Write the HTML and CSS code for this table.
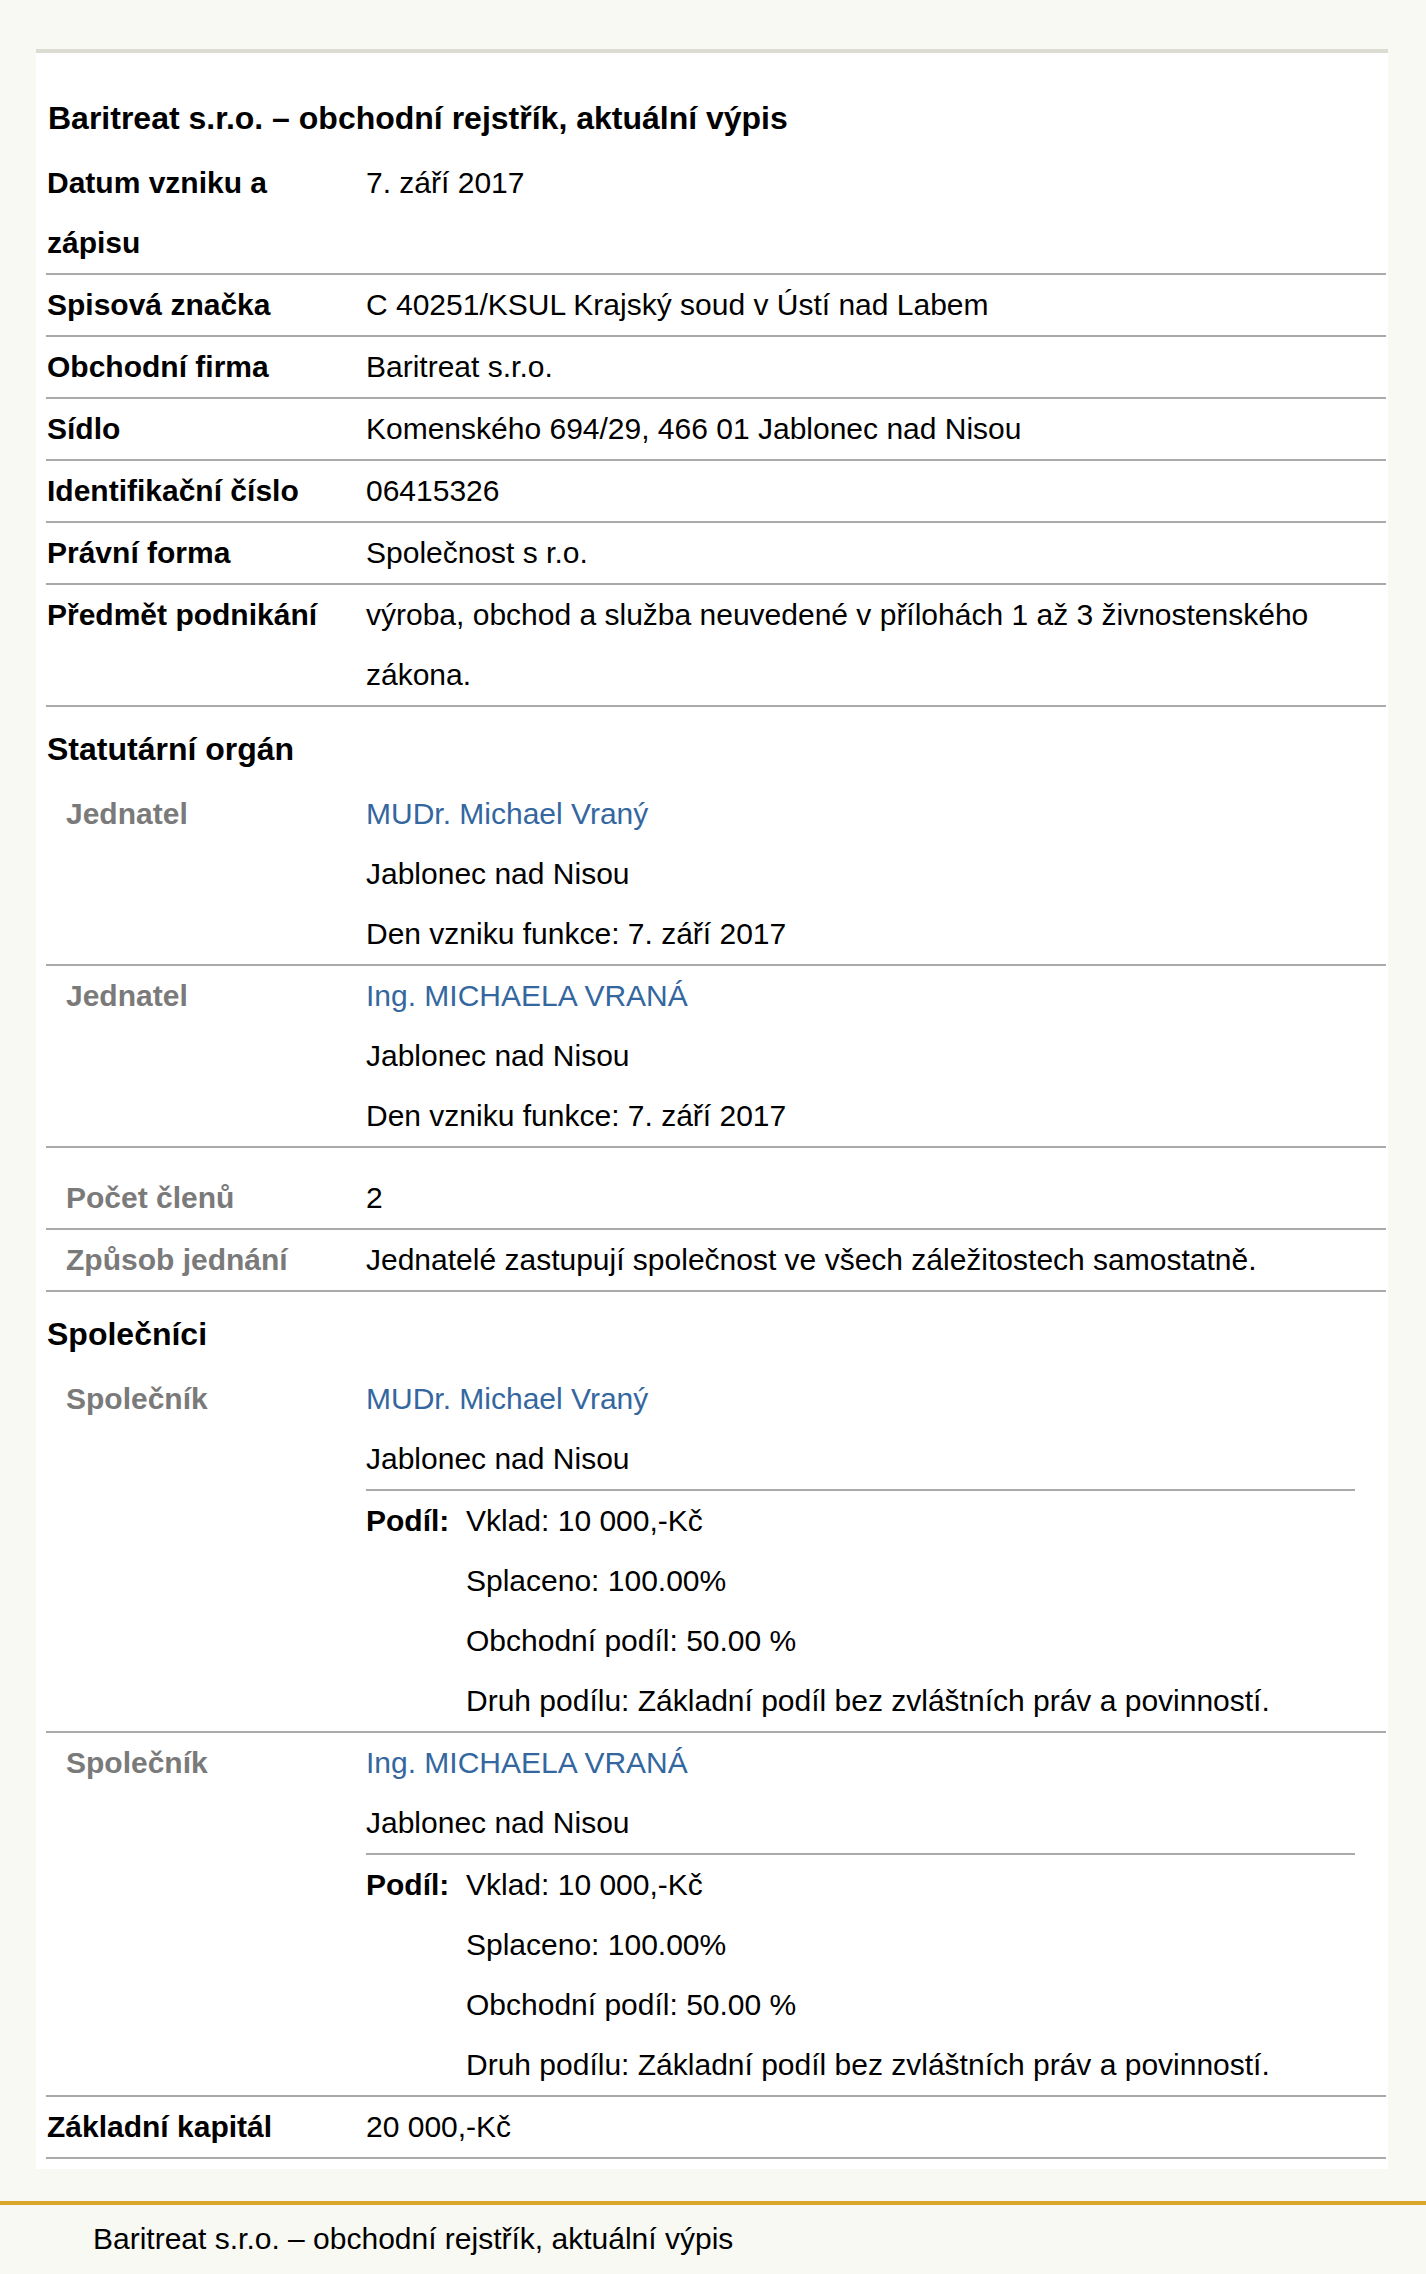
FILE: index.html
```html
<!DOCTYPE html>
<html lang="cs">
<head>
  <meta charset="UTF-8">
  <meta name="viewport" content="width=device-width, initial-scale=1.0">
  <title>Baritreat s.r.o. – obchodní rejstřík, aktuální výpis</title>
  <link rel="stylesheet" href="styles.css">
</head>
<body>
  <div class="page">
    <div class="sheet">
      <h1 class="title">Baritreat s.r.o. – obchodní rejstřík, aktuální výpis</h1>

      <div class="row">
        <div class="label">Datum vzniku a zápisu</div>
        <div class="value">7. září 2017</div>
      </div>
      <div class="row">
        <div class="label">Spisová značka</div>
        <div class="value">C 40251/KSUL Krajský soud v Ústí nad Labem</div>
      </div>
      <div class="row">
        <div class="label">Obchodní firma</div>
        <div class="value">Baritreat s.r.o.</div>
      </div>
      <div class="row">
        <div class="label">Sídlo</div>
        <div class="value">Komenského 694/29, 466 01 Jablonec nad Nisou</div>
      </div>
      <div class="row">
        <div class="label">Identifikační číslo</div>
        <div class="value">06415326</div>
      </div>
      <div class="row">
        <div class="label">Právní forma</div>
        <div class="value">Společnost s r.o.</div>
      </div>
      <div class="row">
        <div class="label">Předmět podnikání</div>
        <div class="value">výroba, obchod a služba neuvedené v přílohách 1 až 3 živnostenského zákona.</div>
      </div>

      <!-- statutární orgán -->
      <h2 class="section">Statutární orgán</h2>
      <div class="persons">
        <div class="row sub">
          <div class="label">Jednatel</div>
          <div class="value">
            <a class="name" href="#">MUDr. Michael Vraný</a>
            <div>Jablonec nad Nisou</div>
            <div>Den vzniku funkce: 7. září 2017</div>
          </div>
        </div>
        <div class="row sub">
          <div class="label">Jednatel</div>
          <div class="value">
            <a class="name" href="#">Ing. MICHAELA VRANÁ</a>
            <div>Jablonec nad Nisou</div>
            <div>Den vzniku funkce: 7. září 2017</div>
          </div>
        </div>
      </div>
      <div class="row sub">
        <div class="label">Počet členů</div>
        <div class="value">2</div>
      </div>
      <div class="row sub">
        <div class="label">Způsob jednání</div>
        <div class="value">Jednatelé zastupují společnost ve všech záležitostech samostatně.</div>
      </div>

      <!-- společníci -->
      <h2 class="section">Společníci</h2>
      <div class="row sub">
        <div class="label">Společník</div>
        <div class="value">
          <a class="name" href="#">MUDr. Michael Vraný</a>
          <div>Jablonec nad Nisou</div>
          <div class="share">
            <div class="share-label">Podíl:</div>
            <div>
              <div>Vklad: 10 000,-Kč</div>
              <div>Splaceno: 100.00%</div>
              <div>Obchodní podíl: 50.00 %</div>
              <div>Druh podílu: Základní podíl bez zvláštních práv a povinností.</div>
            </div>
          </div>
        </div>
      </div>
      <div class="row sub">
        <div class="label">Společník</div>
        <div class="value">
          <a class="name" href="#">Ing. MICHAELA VRANÁ</a>
          <div>Jablonec nad Nisou</div>
          <div class="share">
            <div class="share-label">Podíl:</div>
            <div>
              <div>Vklad: 10 000,-Kč</div>
              <div>Splaceno: 100.00%</div>
              <div>Obchodní podíl: 50.00 %</div>
              <div>Druh podílu: Základní podíl bez zvláštních práv a povinností.</div>
            </div>
          </div>
        </div>
      </div>

      <div class="row">
        <div class="label">Základní kapitál</div>
        <div class="value">20 000,-Kč</div>
      </div>
    </div>
  </div>

  <div class="footer">Baritreat s.r.o. – obchodní rejstřík, aktuální výpis</div>
</body>
</html>
```

FILE: styles.css
```css
body {
  font-family: "Liberation Sans", Arial, sans-serif;
  font-size: 30px;
  background-color: #f9f9f4;
  color: #000;
  margin: 0;
  padding: 0;
}

.page {
  padding: 49px 38px 0 36px;
}

.sheet {
  background-color: #fff;
  border-top: 4px solid #dddcd3;
  padding: 0 2px 10px 10px;
}

.title {
  font-size: 32px;
  font-weight: bold;
  line-height: 64px;
  margin: 0;
  padding: 33px 0 3px 2px;
}

.row {
  display: grid;
  grid-template-columns: 320px 1fr;
  line-height: 60px;
  border-bottom: 2px solid #aaa;
}

.label {
  font-weight: bold;
  padding: 0 10px 0 1px;
}

.value {
  min-width: 0;
}

.section {
  font-size: 32px;
  font-weight: bold;
  line-height: 64px;
  margin: 0;
  padding: 10px 0 3px 1px;
}

/* podřízené řádky - šedé odsazené popisky */
.sub .label {
  color: #7a7a7a;
  padding-left: 20px;
}

.persons {
  margin-bottom: 20px;
}

.name {
  display: block;
  color: #3467a0;
  text-decoration: none;
}

.share {
  display: grid;
  grid-template-columns: 100px 1fr;
  border-top: 2px solid #aaa;
  margin-right: 31px;
}

.share-label {
  font-weight: bold;
}

.footer {
  margin-top: 32px;
  border-top: 4px solid #d9a62a;
  padding: 4px 0 5px 93px;
  line-height: 60px;
}
```
